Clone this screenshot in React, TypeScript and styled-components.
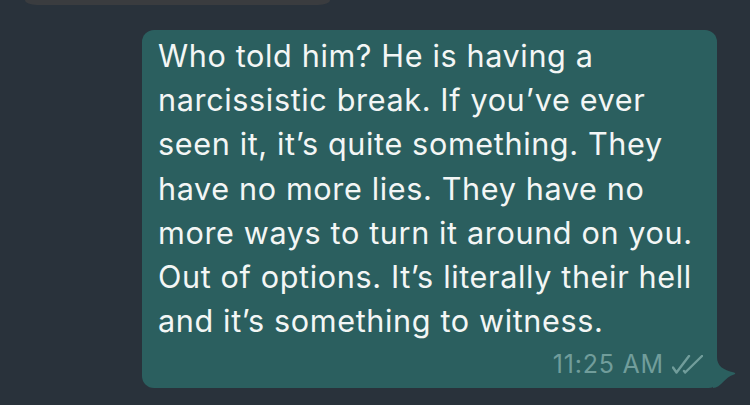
import React from "react";
import styled, { createGlobalStyle } from "styled-components";

const pageColor = "#29323b";
const sentColor = "#2b5f5f";
const receivedColor = "#3a3c3f";
const textColor = "#f3f6f5";
const metaColor = "#719d9b";

const GlobalStyle = createGlobalStyle`
  html, body {
    margin: 0;
    padding: 0;
    background: ${pageColor};
  }
  body {
    width: 750px;
    height: 405px;
    overflow: hidden;
    font-family: Inter, "Noto Sans", "Liberation Sans", sans-serif;
  }
`;

const Chat = styled.div`
  display: flex;
  flex-direction: column;
  gap: 25px;
  width: 750px;
  height: 405px;
`;

const ReceivedTail = styled.div`
  align-self: flex-start;
  margin-left: 25px;
  width: 305px;
  height: 5px;
  background: ${receivedColor};
  border-radius: 0 0 12px 12px / 0 0 5px 5px;
`;

const SentBubble = styled.div`
  position: relative;
  align-self: flex-end;
  margin-right: 33px;
  width: 575px;
  box-sizing: border-box;
  padding: 4px 14px 10px 16px;
  background: ${sentColor};
  border-radius: 12px 12px 8px 12px;
  color: ${textColor};
`;

const Body = styled.div`
  font-size: 30.6px;
  line-height: 44.2px;
  letter-spacing: 0.63px;
`;

const Line = styled.div`
  white-space: nowrap;
`;

const Meta = styled.div`
  display: flex;
  justify-content: flex-end;
  align-items: center;
  gap: 8px;
  margin-top: 7px;
  height: 28px;
  font-size: 25px;
  line-height: 28px;
  letter-spacing: 0.8px;
  color: ${metaColor};
`;

const Tail = styled.svg`
  position: absolute;
  right: -22px;
  bottom: 0;
`;

const lines = [
  "Who told him? He is having a",
  "narcissistic break. If you\u2019ve ever",
  "seen it, it\u2019s quite something. They",
  "have no more lies. They have no",
  "more ways to turn it around on you.",
  "Out of options. It\u2019s literally their hell",
  "and it\u2019s something to witness.",
];

const DoubleCheck = () => (
  <svg width="31" height="19" viewBox="0 0 31 19" fill="none">
    <path
      d="M1 12.5 L4.5 17.5 L17 1"
      stroke={metaColor}
      strokeWidth="2.4"
      strokeLinecap="round"
      strokeLinejoin="round"
    />
    <path
      d="M12 16 L13.2 17.5 L30 1"
      stroke={metaColor}
      strokeWidth="2.4"
      strokeLinecap="round"
      strokeLinejoin="round"
    />
  </svg>
);

export default function App() {
  return (
    <>
      <GlobalStyle />
      <Chat>
        <ReceivedTail />
        <SentBubble>
          <Body>
            {lines.map((l) => (
              <Line key={l}>{l}</Line>
            ))}
          </Body>
          <Meta>
            <span>11:25 AM</span>
            <DoubleCheck />
          </Meta>
          <Tail width="26" height="34" viewBox="0 0 26 34">
            <path
              d="M0 0 L4 0 L4 3 C4 12 10 16 21 18.5 Q23.5 19.5 21 20.6 C12 23 8 34 0 34 Z"
              fill={sentColor}
            />
          </Tail>
        </SentBubble>
      </Chat>
    </>
  );
}
